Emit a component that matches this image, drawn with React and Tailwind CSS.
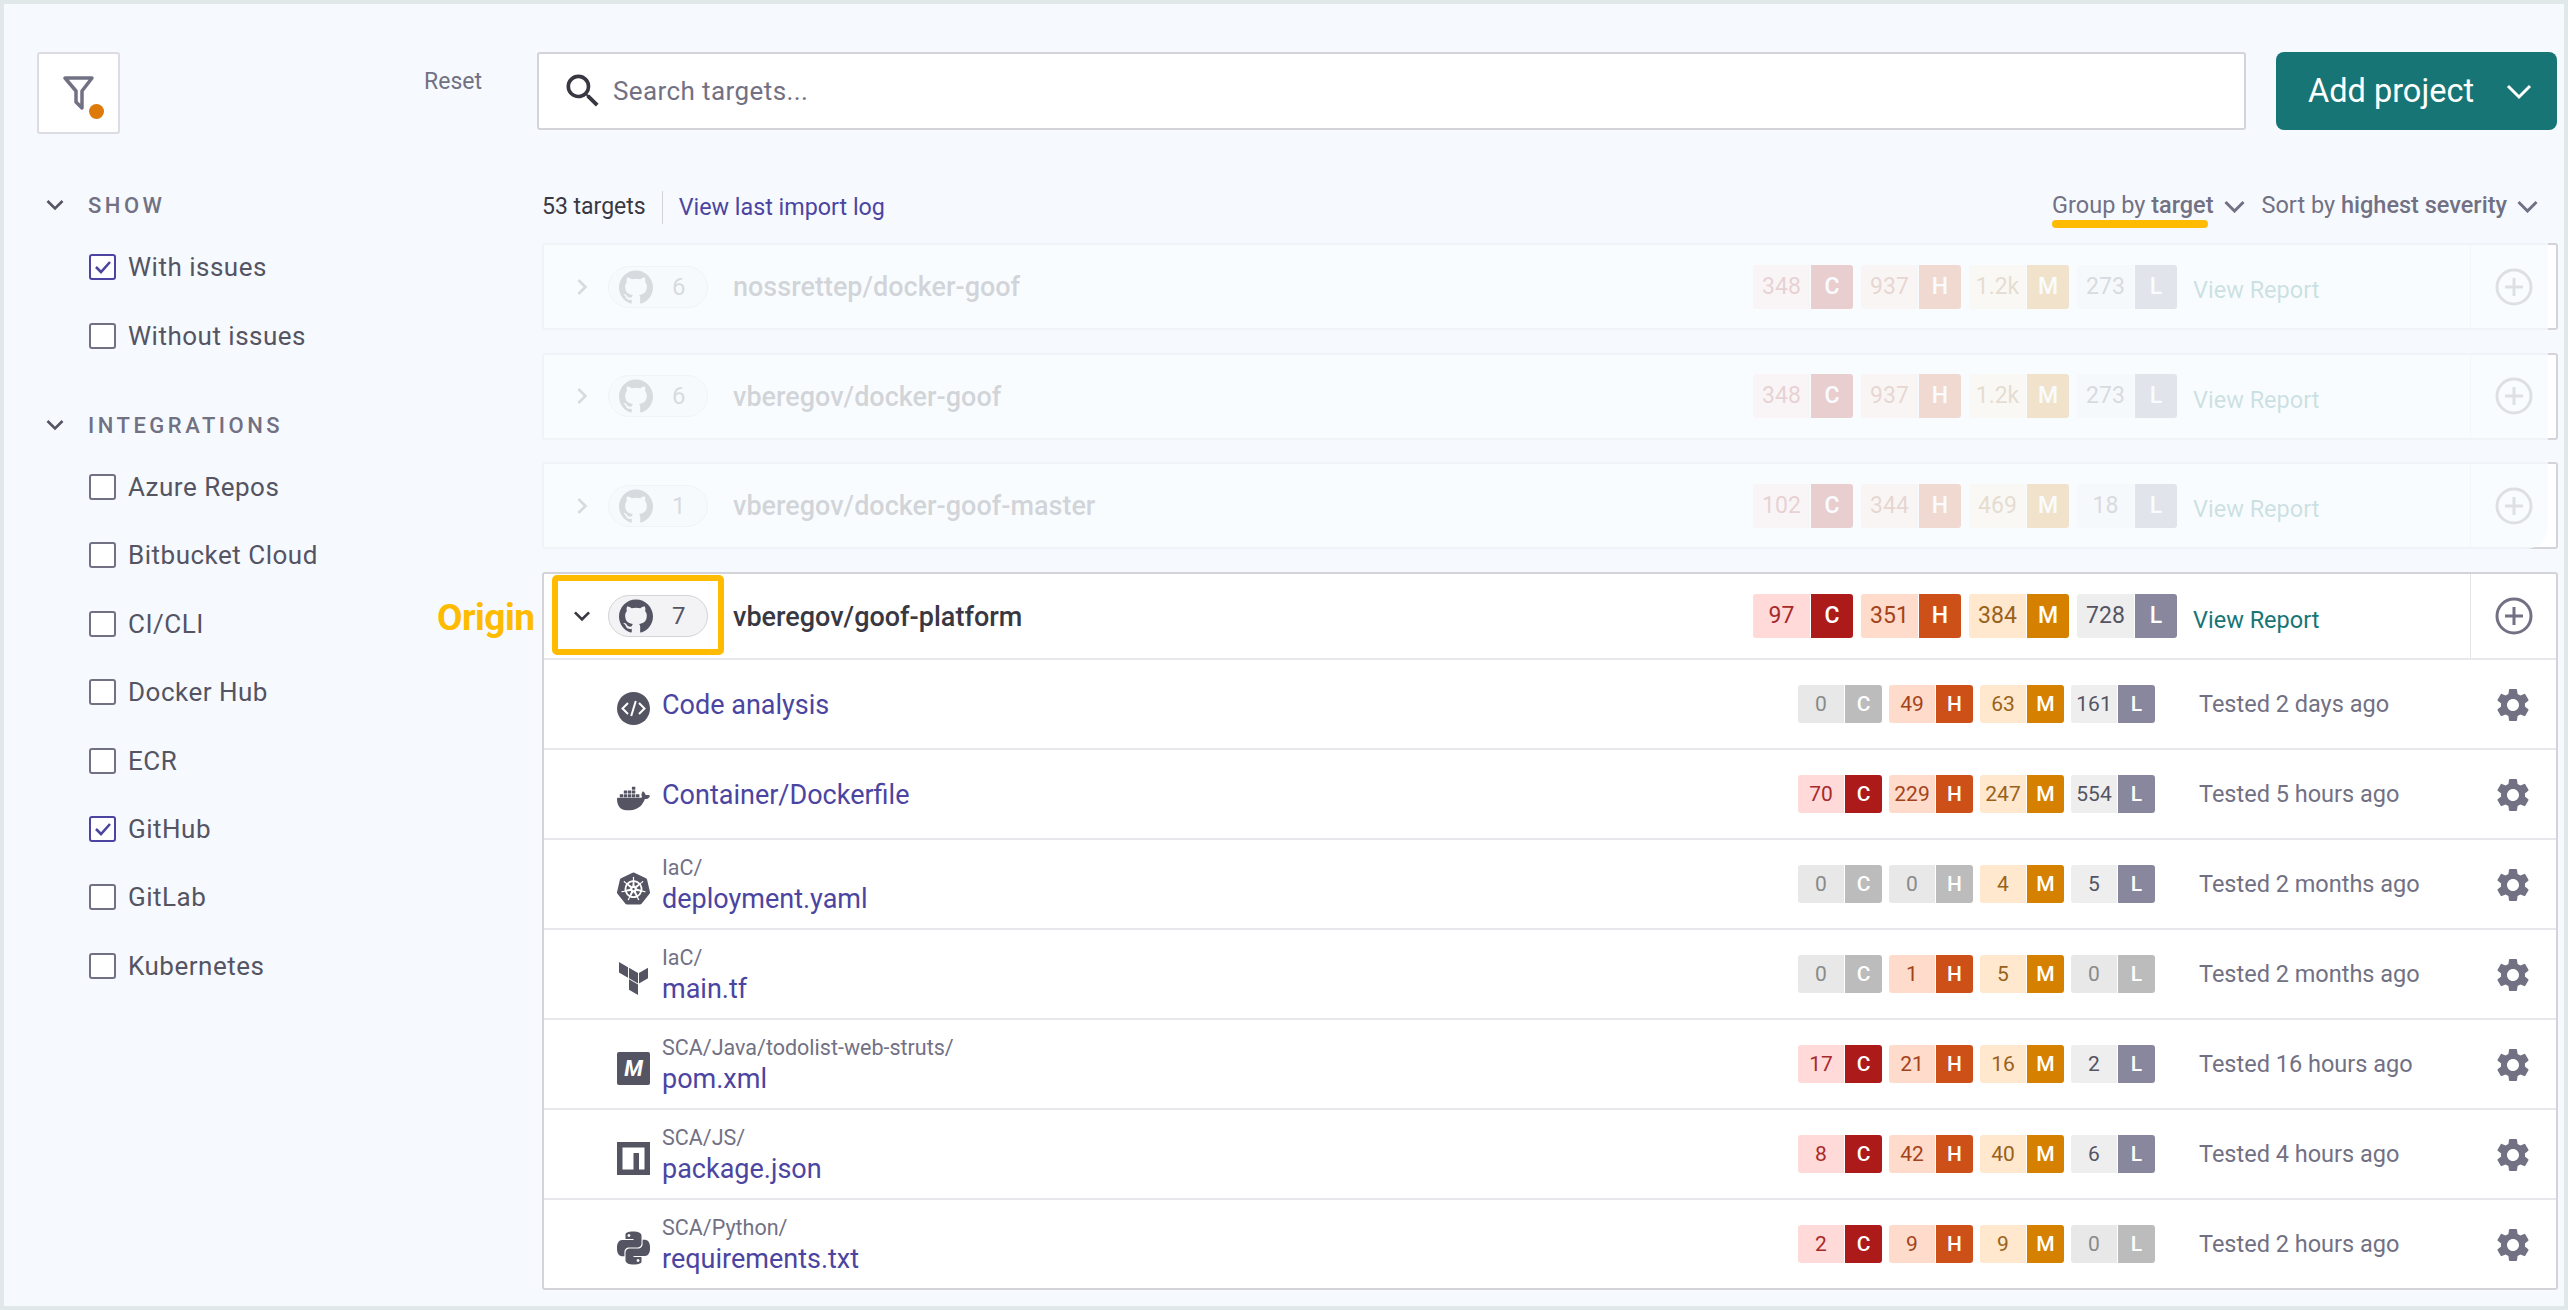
import { MdSettings, MdSearch, MdKeyboardArrowDown, MdKeyboardArrowRight } from "react-icons/md";
import { SiGithub, SiDocker, SiKubernetes, SiTerraform, SiPython } from "react-icons/si";

const TONES = {
  C: { count: "bg-[#ffdad8] text-[#a8292c]", letter: "bg-[#ad1a1a]" },
  H: { count: "bg-[#ffdbcc] text-[#a3431a]", letter: "bg-[#ce5019]" },
  M: { count: "bg-[#ffe8cd] text-[#99621a]", letter: "bg-[#d68000]" },
  L: { count: "bg-[#eeeeee] text-[#555463]", letter: "bg-[#88879e]" },
};

const parentRows = [
  { name: "nossrettep/docker-goof", projects: 6, counts: ["348", "937", "1.2k", "273"] },
  { name: "vberegov/docker-goof", projects: 6, counts: ["348", "937", "1.2k", "273"] },
  { name: "vberegov/docker-goof-master", projects: 1, counts: ["102", "344", "469", "18"], rounded: true },
];

const projects = [
  { icon: "code", name: "Code analysis", counts: [0, 49, 63, 161], tested: "Tested 2 days ago" },
  { icon: "docker", name: "Container/Dockerfile", counts: [70, 229, 247, 554], tested: "Tested 5 hours ago" },
  { icon: "k8s", path: "IaC/", name: "deployment.yaml", counts: [0, 0, 4, 5], tested: "Tested 2 months ago" },
  { icon: "terraform", path: "IaC/", name: "main.tf", counts: [0, 1, 5, 0], tested: "Tested 2 months ago" },
  { icon: "maven", path: "SCA/Java/todolist-web-struts/", name: "pom.xml", counts: [17, 21, 16, 2], tested: "Tested 16 hours ago" },
  { icon: "npm", path: "SCA/JS/", name: "package.json", counts: [8, 42, 40, 6], tested: "Tested 4 hours ago" },
  { icon: "python", path: "SCA/Python/", name: "requirements.txt", counts: [2, 9, 9, 0], tested: "Tested 2 hours ago" },
];

const integrations = [
  ["Azure Repos", false],
  ["Bitbucket Cloud", false],
  ["CI/CLI", false],
  ["Docker Hub", false],
  ["ECR", false],
  ["GitHub", true],
  ["GitLab", false],
  ["Kubernetes", false],
];

const Checkbox = ({ label, checked }) => (
  <div className="flex items-center h-[26px]">
    <div
      className={`w-[27px] h-[26px] rounded-[3px] border-2 bg-white flex items-center justify-center ${
        checked ? "border-[#4b45a1]" : "border-[#727184]"
      }`}
    >
      {checked && (
        <svg width="18" height="16" viewBox="0 0 18 16" fill="none">
          <path d="M2 8l5 5 9-10" stroke="#4b45a1" strokeWidth="2.6" />
        </svg>
      )}
    </div>
    <span className="ml-[12px] text-[26px] leading-none tracking-[0.5px] text-[#555463]">{label}</span>
  </div>
);

const SectionTitle = ({ children }) => (
  <div className="flex items-center h-[26px] pl-[9px]">
    <svg width="18" height="12" viewBox="0 0 18 12" fill="none">
      <path d="M1.5 2l7.5 7.5L16.5 2" stroke="#555463" strokeWidth="2.6" />
    </svg>
    <span className="ml-[24px] text-[22px] font-medium tracking-[3.5px] text-[#727184]">{children}</span>
  </div>
);

const Badge = ({ tone, value, big }) => {
  const zero = value === 0;
  return (
    <div className={`flex rounded-[3px] overflow-hidden pt-0 ${big ? "h-[44px] text-[23px]" : "h-[38px] text-[21px]"}`}>
      <div
        className={`flex items-center justify-center pt-[1px] ${big ? "w-[57px]" : "w-[46px]"} ${
          zero ? "bg-[#e8e8e8] text-[#8a8a8a]" : TONES[tone].count
        }`}
      >
        {value}
      </div>
      <div
        className={`flex items-center justify-center pt-[1px] border-l border-white font-medium text-white ${
          big ? "w-[43px]" : "w-[38px]"
        } ${zero ? "bg-[#bcbcbc]" : TONES[tone].letter}`}
      >
        {tone}
      </div>
    </div>
  );
};

const Badges = ({ counts, big }) => (
  <div className={`flex ${big ? "gap-[8px]" : "gap-[7px]"}`}>
    {["C", "H", "M", "L"].map((tone, i) => (
      <Badge key={tone} tone={tone} value={counts[i]} big={big} />
    ))}
  </div>
);

const PlusCircle = () => (
  <svg width="38" height="38" viewBox="0 0 38 38" fill="none" stroke="#727184" strokeWidth="3">
    <circle cx="19" cy="19" r="17" />
    <path d="M19 10v18M10 19h18" />
  </svg>
);

const Pill = ({ count }) => (
  <div className="flex items-center w-[100px] h-[42px] rounded-full border border-[#d3d3d9] bg-[#f3f3f6] pl-[10px]">
    <SiGithub size={34} color="#555463" />
    <span className="ml-[19px] text-[24px] text-[#555463]">{count}</span>
  </div>
);

// header of a target row, used for the faded ones and the expanded one
const TargetHeader = ({ name, count, counts, open, className }) => (
  <div className={`flex items-center ${className}`}>
    <div className="w-[64px] pl-[22px] flex items-center">
      {open ? (
        <MdKeyboardArrowDown size={32} color="#393842" />
      ) : (
        <MdKeyboardArrowRight size={32} color="#555463" />
      )}
    </div>
    <Pill count={count} />
    <div className="ml-[25px] pt-[2px] flex-1 text-[27px] font-medium text-[#393842]">{name}</div>
    <Badges counts={counts} big />
    <div className="ml-[16px] w-[277px] pt-[9px] text-[23.500px] text-[#177575]">View Report</div>
    <div className="w-[86px] self-stretch border-l border-[#e4e4e9] flex items-center justify-center">
      <PlusCircle />
    </div>
  </div>
);

const ProjectIcon = ({ type }) => {
  const fill = "#555463";
  if (type === "code")
    return (
      <svg width="33" height="33" viewBox="0 0 33 33" fill="none">
        <circle cx="16.5" cy="16.5" r="16.5" fill={fill} />
        <path d="M11 11l-5.5 5.5L11 22M22 11l5.5 5.5L22 22M18.8 9l-4.6 15" stroke="#fff" strokeWidth="2" />
      </svg>
    );
  if (type === "docker") return <SiDocker size={33} color={fill} />;
  if (type === "k8s") return <SiKubernetes size={33} color={fill} />;
  if (type === "terraform") return <SiTerraform size={33} color={fill} />;
  if (type === "python") return <SiPython size={38} color={fill} />;
  if (type === "maven")
    return (
      <div className="w-[33px] h-[33px] rounded-[2px] bg-[#555463] flex items-center justify-center text-[22px] font-bold italic text-white">
        M
      </div>
    );
  return (
    <svg width="33" height="33" viewBox="0 0 33 33">
      <path fillRule="evenodd" d="M0 0h33v33H0zM5.5 5.5v22h11v-16.500h5.500v16.500h5.500v-22z" fill={fill} />
    </svg>
  );
};

const ProjectRow = ({ project }) => (
  <div className="flex items-center h-[90px] border-t-2 border-[#e8e8ec]">
    <div className="ml-[73px] mt-[8px] w-[33px] flex items-center justify-center">
      <ProjectIcon type={project.icon} />
    </div>
    <div className="ml-[12px] mt-[2px] flex-1 flex flex-col">
      {project.path && <div className="text-[21.500px] leading-[28px] text-[#727184]">{project.path}</div>}
      <div className="text-[27px] leading-[34px] text-[#4b45a1]">{project.name}</div>
    </div>
    <Badges counts={project.counts} />
    <div className="ml-[44px] pt-[1px] w-[271px] text-[23.500px] text-[#727184]">{project.tested}</div>
    <div className="w-[86px] pt-[2px] flex items-center justify-center">
      <MdSettings size={40} color="#727184" />
    </div>
  </div>
);

export default function App() {
  return (
    <div className="w-[2568px] h-[1310px] border-4 border-[#e0e8ea] bg-[#f6fafe] flex font-['Roboto',sans-serif] overflow-hidden">
      {/* Filters */}
      <aside className="w-[533px] shrink-0 pt-[48px] pl-[33px]">
        <div className="flex items-start w-[445px]">
          <div className="relative w-[83px] h-[82px] rounded-[3px] border-2 border-[#dcdce2] bg-white flex items-center justify-center">
            <svg width="32" height="36" viewBox="0 0 32 36" fill="none">
              <path d="M2 3h27L19 16v17l-6-6V16L2 3z" stroke="#727184" strokeWidth="3.500" strokeLinejoin="round" />
            </svg>
            <span className="absolute left-[50px] top-[50px] w-[15px] h-[15px] rounded-full bg-[#dd7a0a]" />
          </div>
          <span className="ml-auto mt-[13px] text-[23px] text-[#727184]">Reset</span>
        </div>

        <div className="mt-[58px]">
          <SectionTitle>SHOW</SectionTitle>
        </div>
        <div className="mt-[36px] ml-[52px] flex flex-col gap-[43px]">
          <Checkbox label="With issues" checked />
          <Checkbox label="Without issues" />
        </div>

        <div className="mt-[63px]">
          <SectionTitle>INTEGRATIONS</SectionTitle>
        </div>
        <div className="mt-[36px] ml-[52px] flex flex-col gap-[42.400px]">
          {integrations.map(([label, checked]) => (
            <Checkbox key={label} label={label} checked={checked} />
          ))}
        </div>
      </aside>

      {/* Targets */}
      <main className="w-[2021px] shrink-0 pt-[48px]">
        <div className="flex gap-[30px] pr-[1px]">
          <div className="flex-1 h-[78px] rounded-[3px] border-2 border-[#d3d3d9] bg-white flex items-center pl-[22px]">
            <MdSearch size={44} color="#393842" />
            <span className="ml-[8px] pt-[1px] text-[26px] tracking-[0.4px] text-[#727184]">Search targets...</span>
          </div>
          <button className="w-[281px] h-[78px] rounded-[8px] bg-[#177575] flex items-center pl-[32px] pt-[1px] text-[32.500px] text-white">
            Add project
            <svg className="ml-[32px]" width="26" height="16" viewBox="0 0 26 16" fill="none">
              <path d="M2 2l11 11L24 2" stroke="#fff" strokeWidth="3" />
            </svg>
          </button>
        </div>

        <div className="h-[113px] pl-[5px] pr-[20px] flex items-center justify-between">
          <div className="flex items-center pt-[41px]">
            <span className="text-[23px] text-[#393842]">53 targets</span>
            <span className="ml-[16px] mr-[16px] w-px h-[33px] bg-[#d3d3d9]" />
            <span className="text-[23.300px] text-[#4b45a1]">View last import log</span>
          </div>
          <div className="flex items-center pt-[39px] text-[23.500px] text-[#727184]">
            <div className="relative flex items-center">
              <span>
                Group by <span className="font-medium">target</span>
              </span>
              <svg className="ml-[10px]" width="21" height="13" viewBox="0 0 21 13" fill="none">
                <path d="M1.500 2l9 9 9-9" stroke="#727184" strokeWidth="3" />
              </svg>
              <span className="absolute left-0 top-[32px] w-[156px] h-[8px] rounded-full bg-[#ffbb00]" />
            </div>
            <div className="ml-[17px] flex items-center">
              <span>
                Sort by <span className="font-medium">highest severity</span>
              </span>
              <svg className="ml-[10px]" width="21" height="13" viewBox="0 0 21 13" fill="none">
                <path d="M1.500 2l9 9 9-9" stroke="#727184" strokeWidth="3" />
              </svg>
            </div>
          </div>
        </div>

        <div className="pl-[5px]">
          <div className="flex flex-col gap-[22.500px]">
            {parentRows.map((row) => (
              <div key={row.name} className="relative h-[87px] rounded-[3px] border-2 border-[#d3d3d9] bg-white flex">
                <TargetHeader name={row.name} count={row.projects} counts={row.counts} className="flex-1" />
                <div
                  className={`absolute -left-[2px] -top-[2px] -bottom-[2px] right-[8px] bg-[#f7fbfe]/80 ${
                    row.rounded ? "rounded-br-[22px]" : ""
                  }`}
                />
              </div>
            ))}
          </div>

          <div className="mt-[23px] rounded-[3px] border-2 border-[#d3d3d9] bg-white">
            <div className="relative">
              <TargetHeader
                name="vberegov/goof-platform"
                count={7}
                counts={[97, 351, 384, 728]}
                open
                className="h-[84px]"
              />
              <div className="absolute left-[8px] top-[1px] w-[172px] h-[80px] rounded-[5px] border-[6px] border-[#ffbb00]" />
              <div className="absolute -left-[107px] top-[22px] text-[37px] leading-[44px] font-bold tracking-[-0.500px] text-[#ffbb00] font-['Liberation_Sans_Narrow','Roboto',sans-serif]">
                Origin
              </div>
            </div>
            {projects.map((project) => (
              <ProjectRow key={project.name} project={project} />
            ))}
          </div>
        </div>
      </main>
    </div>
  );
}
